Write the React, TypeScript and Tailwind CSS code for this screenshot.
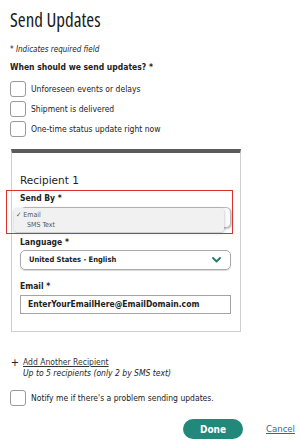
import { ReactNode } from 'react'

function Box() {
  return <span className="w-4 h-4 shrink-0 rounded-[3px] border border-[#9a9a9a] bg-white" />
}

function CheckRow({ children }: { children: ReactNode }) {
  return (
    <label className="flex items-center gap-[5px] h-4">
      <Box />
      <span className="text-[8.5px] leading-[12px] text-[#222]">{children}</span>
    </label>
  )
}

export default function App() {
  return (
    <div className="w-[300px] h-[445px] overflow-hidden bg-white pl-[10px] font-['DejaVu_Sans',sans-serif] font-stretch-condensed text-[#222]">
      <h1 className="mt-[5px] text-[19px] leading-[30px] font-['Open_Sans',sans-serif] text-[#1a1a1a]">
        Send Updates
      </h1>
      <p className="mt-[9px] text-[8px] leading-[12px] italic">* Indicates required field</p>
      <p className="mt-[5px] text-[8.5px] leading-[12px] font-bold">When should we send updates? *</p>

      <div className="mt-[8px] flex flex-col gap-[4px]">
        <CheckRow>Unforeseen events or delays</CheckRow>
        <CheckRow>Shipment is delivered</CheckRow>
        <CheckRow>One-time status update right now</CheckRow>
      </div>

      {/* Recipient card */}
      <div className="mt-[12px] ml-px w-[230px] border-t-4 border-t-[#5b5b5b] border-x border-b border-[#cfcfcf] pl-[8px] pr-[9px] pt-[20px] pb-[17px]">
        <p className="text-[10.5px] leading-[14px] font-stretch-normal">Recipient 1</p>

        <div className="relative mt-[5px]">
          {/* highlight box */}
          <div className="absolute left-[-14px] top-[-2px] w-[227px] h-[44px] border-[1.5px] border-[#d9312b] pointer-events-none z-20" />
          <p className="text-[8.5px] leading-[12px] font-bold">Send By *</p>
          <div className="relative mt-[3px] h-[21px] rounded-[5px] border border-[#b9b9b9] bg-[#fafafa] shadow-[1px_1px_2px_rgba(0,0,0,0.25)]">
            <div className="absolute left-[-7px] top-0 w-[210px] h-[24px] rounded-[3px] bg-[#f1f1f1] shadow-[0_1px_3px_rgba(0,0,0,0.3)] z-10 flex flex-col justify-center text-[7px] leading-[10px] text-[#555]">
              <span className="pl-[2px]">✓ Email</span>
              <span className="pl-[13px]">SMS Text</span>
            </div>
          </div>
        </div>

        <p className="mt-[8px] text-[8.5px] leading-[12px] font-bold">Language *</p>
        <div className="mt-[2px] h-[20px] rounded-[5px] border border-[#a9a9a9] shadow-[0_1px_1px_rgba(0,0,0,0.15)] flex items-center justify-between pl-[8px] pr-[9px]">
          <span className="text-[7.5px] font-bold">United States - English</span>
          <svg width="9" height="6" viewBox="0 0 9 6" fill="none">
            <polyline points="1,1 4.5,4.5 8,1" stroke="#1f7a67" strokeWidth="1.8" strokeLinecap="round" strokeLinejoin="round" />
          </svg>
        </div>

        <p className="mt-[10px] text-[8.5px] leading-[12px] font-bold">Email *</p>
        <div className="mt-[3px] h-[19px] border border-[#a3a3a3] flex items-center pl-[7px]">
          <span className="text-[8.5px] font-bold">EnterYourEmailHere@EmailDomain.com</span>
        </div>
      </div>

      <div className="mt-[25px] flex items-start gap-[3px]">
        <span className="w-[10px] text-center text-[11px] leading-[11px]">+</span>
        <div>
          <a className="block text-[8.5px] leading-[11px] underline text-[#333]">Add Another Recipient</a>
          <p className="text-[8.5px] leading-[11px] italic">Up to 5 recipients (only 2 by SMS text)</p>
        </div>
      </div>

      <div className="mt-[11px]">
        <CheckRow>Notify me if there's a problem sending updates.</CheckRow>
      </div>

      <div className="mt-[13px] flex items-center">
        <button className="ml-[173px] w-[60px] h-[20px] rounded-full bg-[#21887a] text-white text-[10px] font-semibold">
          Done
        </button>
        <a className="ml-[23px] text-[9.5px] underline text-[#3a5ea8]">Cancel</a>
      </div>
    </div>
  )
}
